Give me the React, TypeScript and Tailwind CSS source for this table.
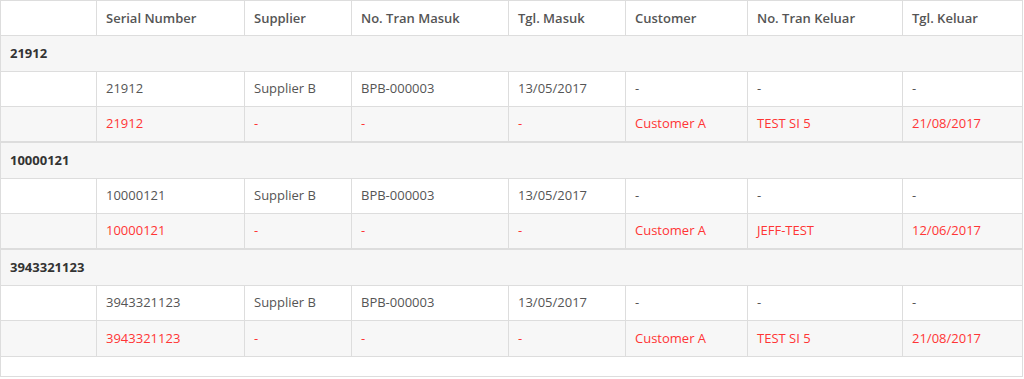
import React from "react";

type Row = { cells: string[]; red?: boolean };
type Group = { label: string; rows: Row[] };

const groups: Group[] = [
  {
    label: "21912",
    rows: [
      { cells: ["21912", "Supplier B", "BPB-000003", "13/05/2017", "-", "-", "-"] },
      { cells: ["21912", "-", "-", "-", "Customer A", "TEST SI 5", "21/08/2017"], red: true },
    ],
  },
  {
    label: "10000121",
    rows: [
      { cells: ["10000121", "Supplier B", "BPB-000003", "13/05/2017", "-", "-", "-"] },
      { cells: ["10000121", "-", "-", "-", "Customer A", "JEFF-TEST", "12/06/2017"], red: true },
    ],
  },
  {
    label: "3943321123",
    rows: [
      { cells: ["3943321123", "Supplier B", "BPB-000003", "13/05/2017", "-", "-", "-"] },
      { cells: ["3943321123", "-", "-", "-", "Customer A", "TEST SI 5", "21/08/2017"], red: true },
    ],
  },
];

const headers = ["", "Serial Number", "Supplier", "No. Tran Masuk", "Tgl. Masuk", "Customer", "No. Tran Keluar", "Tgl. Keluar"];
const widths = [95, 148, 107, 157, 117, 122, 155, 119];

export default function App() {
  return (
    <div
      className="bg-white w-[1024px] h-[379px]"
      style={{ fontFamily: '"Open Sans", "Noto Sans", sans-serif' }}
    >
      <div className="w-[1023px] border border-[#dddddd] bg-white text-[13px] text-[#555555]">
        <table className="w-full table-fixed border-separate border-spacing-0">
          <colgroup>
            {widths.map((w, i) => (
              <col key={i} style={{ width: i === widths.length - 1 ? undefined : w }} />
            ))}
          </colgroup>
          <thead>
            <tr>
              {headers.map((h, i) => (
                <th
                  key={i}
                  className={`h-[35px] p-0 pl-[9px] pt-px text-left align-middle font-semibold text-[#555555] border-b border-[#dddddd] ${
                    i > 0 ? "border-l" : ""
                  }`}
                >
                  {h}
                </th>
              ))}
            </tr>
          </thead>
          {groups.map((g, gi) => {
            const last = gi === groups.length - 1;
            return (
              <tbody key={gi}>
                <tr>
                  <td
                    colSpan={8}
                    className="h-[36px] p-0 pl-[9px] align-middle font-bold text-[#333333] bg-[#f6f6f6] border-b border-[#dddddd]"
                  >
                    {g.label}
                  </td>
                </tr>
                {g.rows.map((r, ri) => (
                  <tr key={ri} className={r.red ? "bg-[#f7f7f7]" : "bg-white"}>
                    {["", ...r.cells].map((c, ci) => (
                      <td
                        key={ci}
                        className={`p-0 pl-[9px] align-middle border-[#dddddd] ${
                          r.red
                            ? last
                              ? "h-[36px] border-b text-[#ff3535]"
                              : "h-[36px] border-b-2 text-[#ff3535]"
                            : "h-[35px] border-b text-[#555555]"
                        } ${ci > 0 ? "border-l" : ""}`}
                      >
                        {c}
                      </td>
                    ))}
                  </tr>
                ))}
              </tbody>
            );
          })}
        </table>
        <div className="h-[19px] bg-white" />
      </div>
    </div>
  );
}
